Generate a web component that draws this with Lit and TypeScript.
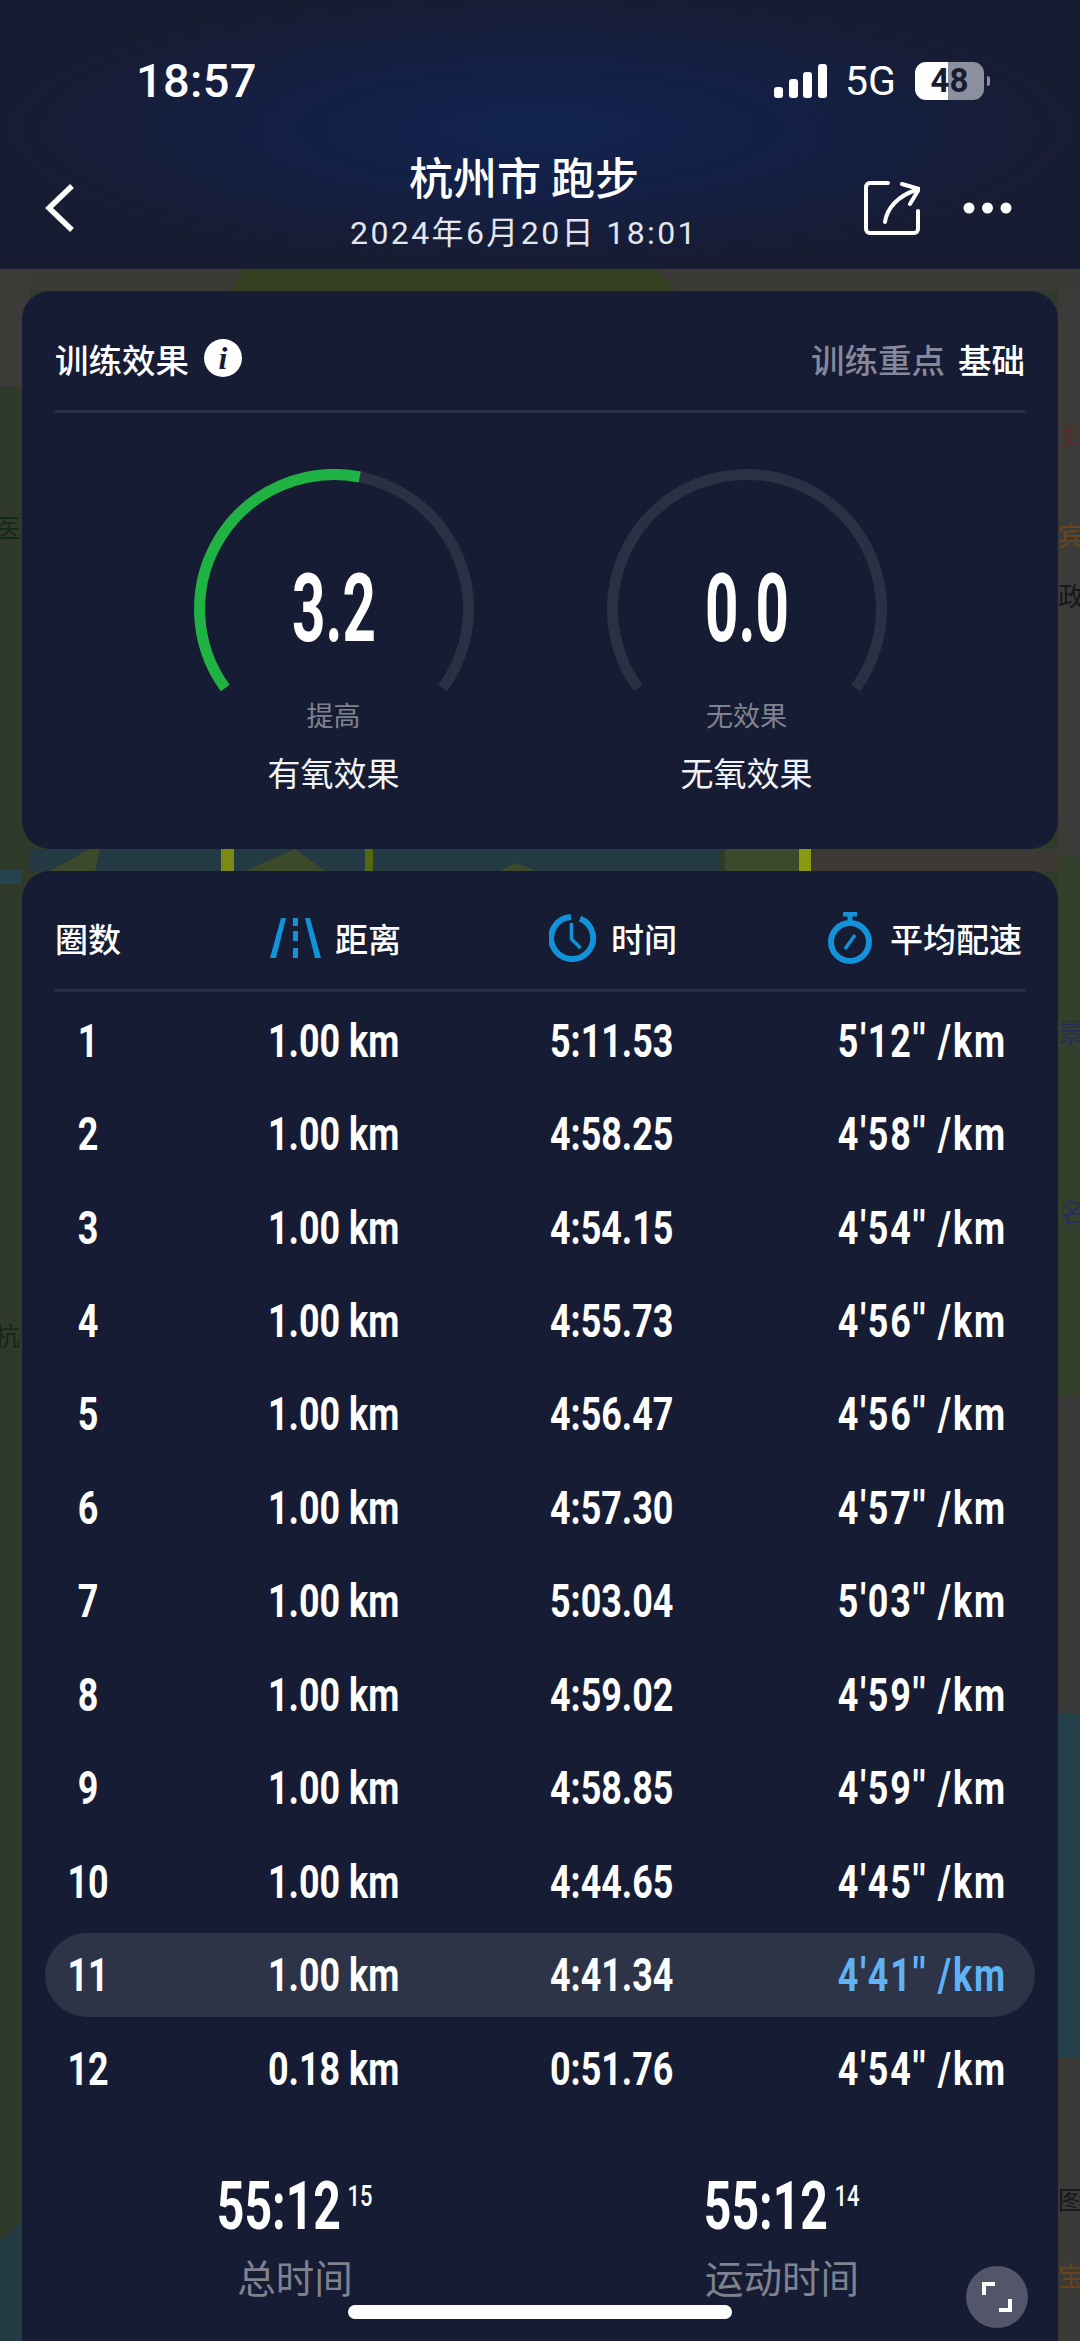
import { LitElement, html, css, svg } from "lit";
import { customElement } from "lit/decorators.js";

const laps = [
  ["1", "1.00 km", "5:11.53", "5'12'' /km"],
  ["2", "1.00 km", "4:58.25", "4'58'' /km"],
  ["3", "1.00 km", "4:54.15", "4'54'' /km"],
  ["4", "1.00 km", "4:55.73", "4'56'' /km"],
  ["5", "1.00 km", "4:56.47", "4'56'' /km"],
  ["6", "1.00 km", "4:57.30", "4'57'' /km"],
  ["7", "1.00 km", "5:03.04", "5'03'' /km"],
  ["8", "1.00 km", "4:59.02", "4'59'' /km"],
  ["9", "1.00 km", "4:58.85", "4'59'' /km"],
  ["10", "1.00 km", "4:44.65", "4'45'' /km"],
  ["11", "1.00 km", "4:41.34", "4'41'' /km"],
  ["12", "0.18 km", "0:51.76", "4'54'' /km"],
];

const FASTEST = "11";

@customElement("app-root")
export class AppRoot extends LitElement {
  static styles = css`
    :host {
      display: block;
      position: relative;
      width: 1080px;
      height: 2341px;
      overflow: hidden;
      background: #333a2c;
      color: #fff;
      font-family: "Noto Sans CJK SC", "Noto Sans", sans-serif;
    }
    .map {
      position: absolute;
      inset: 0;
    }
    .map text {
      font-family: "Noto Sans CJK SC", sans-serif;
      font-size: 26px;
    }
    header,
    .card {
      position: relative;
    }
    header {
      height: 269px;
      box-sizing: border-box;
      padding-top: 50px;
      background: radial-gradient(ellipse 50% 50% at 50% 48%, #122450 0%, #141f42 58%, #181c33 100%);
    }
    .status {
      display: flex;
      justify-content: space-between;
      align-items: center;
      height: 62px;
      padding: 0 90px 0 136px;
    }
    .clock {
      font: 500 47px/62px Roboto, sans-serif;
      letter-spacing: 0.3px;
    }
    .status-right {
      display: flex;
      align-items: center;
    }
    .net {
      font: 400 41px/62px Roboto, sans-serif;
      margin: 0 19px 0 18px;
    }
    .battery {
      width: 69px;
      height: 38px;
      border-radius: 11px;
      background: linear-gradient(90deg, #fff 48%, #8c8f9d 48%);
      color: #171c33;
      font: 700 33px/38px Roboto, sans-serif;
      text-align: center;
    }
    .tip {
      width: 3px;
      height: 10px;
      margin-left: 3px;
      border-radius: 0 3px 3px 0;
      background: #8c8f9d;
    }
    .nav {
      display: grid;
      grid-template-columns: 1fr auto 1fr;
      align-items: center;
      padding: 36px 68px 0 45px;
    }
    .back,
    .actions {
      margin-top: 12px;
    }
    .heading {
      margin-right: 9px;
    }
    .title {
      font-size: 44px;
      font-weight: 500;
      line-height: 56px;
      text-align: center;
    }
    .date {
      font-size: 32px;
      line-height: 44px;
      margin-top: 7px;
      text-align: center;
      color: #e4e6ec;
      letter-spacing: 2.4px;
      font-family: Roboto, "Noto Sans CJK SC", sans-serif;
    }
    .actions {
      display: flex;
      justify-content: flex-end;
      align-items: center;
      gap: 43px;
    }
    svg {
      display: block;
      flex: none;
    }
    .card {
      margin: 22px 22px 0;
      padding: 0 33px;
      border-radius: 28px;
      background: #161c33;
    }
    .effect {
      height: 558px;
      box-sizing: border-box;
    }
    .laps {
      height: 1500px;
      box-sizing: border-box;
    }
    .card-head {
      display: flex;
      justify-content: space-between;
      align-items: center;
      height: 119px;
      box-sizing: border-box;
      padding-top: 15px;
      font-size: 33.5px;
      font-weight: 500;
    }
    .head-left {
      display: flex;
      align-items: center;
      gap: 15px;
    }
    .info {
      width: 38px;
      height: 38px;
      border-radius: 50%;
      background: #fff;
      color: #161c33;
      font: italic 700 32px/38px "Liberation Serif", serif;
      text-align: center;
    }
    .muted {
      color: #85889a;
      margin-right: 13px;
    }
    .rule {
      height: 3px;
      background: #2a2f44;
    }
    .gauges {
      display: flex;
      justify-content: center;
      gap: 133px;
      padding-top: 56px;
    }
    .gauge {
      position: relative;
      width: 280px;
      text-align: center;
    }
    .gauge-value {
      position: absolute;
      top: 84px;
      left: 0;
      right: 0;
      font: 700 94px/112px Roboto, sans-serif;
      transform: scaleX(0.62);
    }
    .gauge-sub {
      font-size: 27px;
      line-height: 36px;
      margin-top: -2px;
      color: #80838f;
    }
    .gauge-name {
      font-size: 33px;
      line-height: 44px;
      margin-top: 17px;
      color: #f2f3f6;
    }
    .table-head {
      display: grid;
      grid-template-columns: 215px 279px 1fr auto;
      align-items: center;
      height: 118px;
      box-sizing: border-box;
      padding: 16px 3px 0 0;
      font-size: 33px;
      font-weight: 500;
    }
    .th {
      display: flex;
      align-items: center;
      gap: 14px;
    }
    .th.pace-head {
      gap: 18px;
    }
    .rows {
      margin: 2px -10px 0;
    }
    .row {
      display: grid;
      grid-template-columns: 213px 282px 1fr auto;
      align-items: center;
      height: 93.45px;
      padding: 0 28px 0 10px;
      font: 700 46px/1 Roboto, sans-serif;
    }
    .row.best {
      position: relative;
      z-index: 0;
    }
    .row.best::before {
      content: "";
      position: absolute;
      z-index: -1;
      inset: 5px 0 5px 0;
      border-radius: 42px;
      background: #2e3447;
    }
    .cell {
      white-space: nowrap;
      transform: scaleX(0.78);
      transform-origin: left center;
    }
    .lap {
      width: 66px;
      text-align: center;
      transform-origin: center;
    }
    .pace {
      letter-spacing: 2.4px;
      transform-origin: right center;
    }
    .best .pace {
      color: #5eb2f5;
    }
    .totals {
      display: grid;
      grid-template-columns: 486px 488px;
      margin: 62px 0 0 -3px;
    }
    .total {
      text-align: center;
    }
    .total-value {
      display: inline-flex;
      align-items: flex-start;
      gap: 9px;
      font: 700 66px/60px Roboto, sans-serif;
      transform: scaleX(0.73);
    }
    .total-value sup {
      font-size: 30px;
      font-weight: 500;
      line-height: 38px;
    }
    .total-name {
      margin-top: 14px;
      font-size: 38.5px;
      line-height: 50px;
      color: #80838f;
    }
    .expand {
      position: absolute;
      left: 966px;
      top: 2266px;
      width: 62px;
      height: 62px;
      border-radius: 50%;
      background: #53566a;
      display: flex;
      align-items: center;
      justify-content: center;
    }
    .home {
      position: absolute;
      left: 348px;
      top: 2305px;
      width: 384px;
      height: 14px;
      border-radius: 7px;
      background: #fff;
    }
  `;

  private map() {
    return html`<svg class="map" width="1080" height="2341" viewBox="0 0 1080 2341">
      ${svg`
        <rect width="1080" height="2341" fill="#303a2a" />
        <rect y="269" width="1080" height="22" fill="#3b3a36" />
        <path d="M245 269h410l20 22H230z" fill="#34401f" />
        <rect y="269" width="30" height="118" fill="#3c3b38" />
        <rect x="800" y="849" width="280" height="22" fill="#3d3a36" />
        <path d="M30 849h690v22H30z" fill="#243a45" />
        <path d="M50 871l40-22h10l-5 22zM245 871l50-22 30 22zM500 871l15-8 22 8z" fill="#3c4a2c" />
        <rect x="725" y="849" width="75" height="22" fill="#3a4a2a" />
        <rect x="221" y="849" width="13" height="22" fill="#7a8a12" />
        <rect x="799" y="849" width="12" height="22" fill="#8a9a10" />
        <rect x="365" y="849" width="8" height="22" fill="#55680f" />
        <path d="M1058 291h22v564h-22z" fill="#3b3b39" />
        <path d="M1058 855h22v540h-22z" fill="#33402b" />
        <path d="M1058 1395h22v318h-22z" fill="#393a38" />
        <path d="M1058 1713h22v345h-22z" fill="#234049" />
        <path d="M1058 2058h22v283h-22z" fill="#3b3a36" />
        <path d="M0 2240l22-18v119H0z" fill="#243a45" />
        <path d="M0 870h22v14H0z" fill="#26424d" />
        <text x="296" y="893" fill="#10171c">西用湖</text>
        <text x="-6" y="538" fill="#122a18">医</text>
        <text x="-6" y="1346" fill="#14261a">杭</text>
        <text x="1062" y="446" fill="#5c2a28">妇</text>
        <text x="1058" y="546" fill="#6a441c">宾</text>
        <text x="1058" y="606" fill="#15171c">政</text>
        <text x="1058" y="1042" fill="#272e5c">景</text>
        <text x="1060" y="1222" fill="#272e5c">名</text>
        <text x="1058" y="2210" fill="#15171c">图</text>
        <text x="1058" y="2286" fill="#6a441c">宝</text>
      `}
    </svg>`;
  }

  private gauge(value: string, sub: string, name: string, active: boolean) {
    return html`<div class="gauge">
      <svg width="280" height="230" viewBox="0 0 280 230" fill="none" stroke-width="11">
        <path d="M31.2 219A134.5 134.5 0 1 1 248.8 219" stroke="#2b3044" />
        ${active
          ? svg`<path d="M31.2 219A134.5 134.5 0 0 1 165.7 8" stroke="#1fb344" />`
          : ""}
      </svg>
      <div class="gauge-value">${value}</div>
      <div class="gauge-sub">${sub}</div>
      <div class="gauge-name">${name}</div>
    </div>`;
  }

  render() {
    return html`
      ${this.map()}
      <header>
        <div class="status">
          <div class="clock">18:57</div>
          <div class="status-right">
            <svg width="53" height="34" viewBox="0 0 53 34" fill="#fff">
              <rect x="0" y="23" width="9" height="11" rx="3" />
              <rect x="15" y="15" width="9" height="19" rx="3" />
              <rect x="29" y="8" width="9" height="26" rx="3" />
              <rect x="44" y="0" width="9" height="34" rx="3" />
            </svg>
            <div class="net">5G</div>
            <div class="battery">48</div>
            <div class="tip"></div>
          </div>
        </div>
        <div class="nav">
          <svg class="back" width="30" height="50" viewBox="0 0 30 50" fill="none" stroke="#fff" stroke-width="5.5">
            <path d="M27 3L4 25l23 22" />
          </svg>
          <div class="heading">
            <div class="title">杭州市 跑步</div>
            <div class="date">2024年6月20日 18:01</div>
          </div>
          <div class="actions">
            <svg width="56" height="54" viewBox="0 0 56 54" fill="none" stroke="#fff" stroke-width="4" stroke-linecap="round" stroke-linejoin="round">
              <path d="M24 2H6a4 4 0 0 0-4 4v42a4 4 0 0 0 4 4h44a4 4 0 0 0 4-4V30" />
              <path d="M21 41c2-14 13-26 31-32" />
              <path d="M38 3l17 5-9 15" />
            </svg>
            <svg width="49" height="12" viewBox="0 0 49 12" fill="#fff">
              <circle cx="6" cy="6" r="5.5" />
              <circle cx="24.5" cy="6" r="5.5" />
              <circle cx="43" cy="6" r="5.5" />
            </svg>
          </div>
        </div>
      </header>

      <section class="card effect">
        <div class="card-head">
          <div class="head-left">训练效果 <div class="info">i</div></div>
          <div><span class="muted">训练重点</span>基础</div>
        </div>
        <div class="rule"></div>
        <div class="gauges">
          ${this.gauge("3.2", "提高", "有氧效果", true)}
          ${this.gauge("0.0", "无效果", "无氧效果", false)}
        </div>
      </section>

      <section class="card laps">
        <div class="table-head">
          <div>圈数</div>
          <div class="th">
            <svg width="51" height="40" viewBox="0 0 51 40" fill="#1292d8">
              <path d="M11 0h5L6 40H0zM40 0h-5l10 40h6zM23 0h5v8h-5zM23 13h5v10h-5zM23 30h5v10h-5z" />
            </svg>
            距离
          </div>
          <div class="th">
            <svg width="48" height="48" viewBox="0 0 48 48" fill="none" stroke="#1292d8" stroke-width="6">
              <path d="M31 4.5A21 21 0 1 1 22 3" />
              <path d="M22.5 9v16l9 9" stroke-width="3.5" />
            </svg>
            时间
          </div>
          <div class="th pace-head">
            <svg width="44" height="52" viewBox="0 0 44 52" fill="none" stroke="#1292d8" stroke-width="6">
              <circle cx="22" cy="30" r="19" />
              <path d="M15 2h14M22 2v9" stroke-width="5" />
              <path d="M17 37l10-14" stroke-width="3.5" />
            </svg>
            平均配速
          </div>
        </div>
        <div class="rule"></div>
        <div class="rows">
          ${laps.map(
            ([lap, distance, time, pace]) => html`<div class="row ${lap === FASTEST ? "best" : ""}">
              <div class="cell lap">${lap}</div>
              <div class="cell">${distance}</div>
              <div class="cell">${time}</div>
              <div class="cell pace">${pace}</div>
            </div>`
          )}
        </div>
        <div class="totals">
          <div class="total">
            <div class="total-value">55:12<sup>15</sup></div>
            <div class="total-name">总时间</div>
          </div>
          <div class="total">
            <div class="total-value">55:12<sup>14</sup></div>
            <div class="total-name">运动时间</div>
          </div>
        </div>
      </section>

      <div class="expand">
        <svg width="30" height="30" viewBox="0 0 30 30" fill="none" stroke="#fff" stroke-width="4">
          <path d="M13 2H2v11M17 28h11V17" />
        </svg>
      </div>
      <div class="home"></div>
    `;
  }
}
